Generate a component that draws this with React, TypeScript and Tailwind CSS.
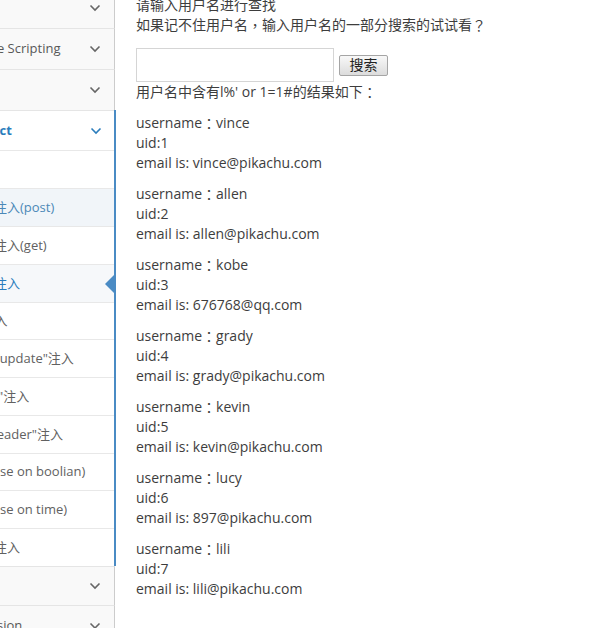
import React from "react";

const subItems = [
  { label: "概述" },
  { label: "数字型注入(post)", hover: true },
  { label: "字符型注入(get)" },
  { label: "搜索型注入", active: true },
  { label: "xx型注入", short: true },
  { label: "\"insert/update\"注入" },
  { label: "\"delete\"注入" },
  { label: "\"http header\"注入" },
  { label: "盲注(base on boolian)", short: true },
  { label: "盲注(base on time)" },
  { label: "宽字节注入" },
];

const results = [
  { name: "vince", uid: 1, email: "vince@pikachu.com" },
  { name: "allen", uid: 2, email: "allen@pikachu.com" },
  { name: "kobe", uid: 3, email: "676768@qq.com" },
  { name: "grady", uid: 4, email: "grady@pikachu.com" },
  { name: "kevin", uid: 5, email: "kevin@pikachu.com" },
  { name: "lucy", uid: 6, email: "897@pikachu.com" },
  { name: "lili", uid: 7, email: "lili@pikachu.com" },
];

// full-width punctuation, centred like the original page renders it
function P({ c }: { c: string }) {
  return (
    <span className="inline-block h-[20px] leading-[20px] align-top font-['Noto_Sans_CJK_TC',sans-serif]">{c}</span>
  );
}

function Chevron({ className = "" }: { className?: string }) {
  return (
    <svg width="12" height="8" viewBox="0 0 12 8" fill="none" className={className}>
      <polyline points="1.5,1.5 6,6 10.5,1.5" stroke="currentColor" strokeWidth="1.6" />
    </svg>
  );
}

function MainRow({ label, h }: { label?: string; h: string }) {
  return (
    <li className={`flex items-center w-[115px] ${h} bg-[#f9f9f9] border-t border-[#e5e5e5] border-r border-r-[#cccccc] text-[#585858] overflow-hidden`}>
      <span className="-ml-[56px] whitespace-nowrap">{label}</span>
      <Chevron className="ml-auto mr-[13px] shrink-0 text-[#666]" />
    </li>
  );
}

export default function App() {
  return (
    <div className="flex h-[628px] overflow-hidden bg-white font-['Open_Sans','Noto_Sans_CJK_SC',sans-serif]">
      {/* Sidebar, scrolled off to the left */}
      <aside className="w-[116px] shrink-0 text-[13px]">
        <ul className="-mt-[13px]">
          <MainRow h="h-[41px]" />
          <MainRow label="Cross-Site Scripting" h="h-[41px]" />
          <MainRow label="CSRF" h="h-[41px]" />

          {/* open group */}
          <li className="w-[116px] border-r-2 border-[#4a8bc4]">
            <div className="flex items-center h-[40px] bg-white border-t border-[#e5e5e5] text-[#2b7dbc] font-bold overflow-hidden">
              <span className="-ml-[54px] whitespace-nowrap">SQL-Inject</span>
              <Chevron className="ml-auto mr-[12px] shrink-0" />
            </div>
            <ul className="bg-white">
              {subItems.map((item) => (
                <li
                  key={item.label}
                  className={`relative flex items-center ${item.short ? "h-[37px]" : "h-[38px]"} border-t border-[#e8e8e8] overflow-hidden ${
                    item.hover ? "bg-[#f1f5f9] text-[#4b88b7]" : item.active ? "bg-[#f6f8fa] text-[#2b7dbc]" : "text-[#616161]"
                  }`}
                >
                  <span className="-ml-[45px] whitespace-nowrap">{item.label}</span>
                  {item.active && (
                    <span className="absolute right-0 top-1/2 -translate-y-1/2 border-y-[9px] border-y-transparent border-r-[9px] border-r-[#4a8bc4]" />
                  )}
                </li>
              ))}
            </ul>
          </li>

          <MainRow label="RCE" h="h-[39px]" />
          <MainRow label="File Inclusion" h="h-[41px]" />
        </ul>
      </aside>

      {/* Main content */}
      <main className="flex-1 pl-[20px] text-[14px] leading-[20px] text-[#3d3d3d]">
        <div className="-mt-[5px]">
          <p>请输入用户名进行查找</p>
          <p>
            如果记不住用户名<P c="，" />输入用户名的一部分搜索的试试看<P c="？" />
          </p>
          <form className="mt-[13px] flex items-center gap-[5px]">
            <input type="text" className="w-[198px] h-[34px] border border-[#d5d5d5] bg-white outline-none px-2" />
            <button
              type="button"
              className="w-[49px] h-[21px] rounded-[2px] border border-[#a5a5a5] bg-linear-to-b from-[#f8f8f8] to-[#dcdcdc] text-[14px] leading-[18px] text-[#222]"
            >
              搜索
            </button>
          </form>
          <p className="mb-[11px]">
            用户名中含有l%' or 1=1#的结果如下<P c="：" />
          </p>
          {results.map((r) => (
            <p key={r.uid} className="mb-[11px]">
              username<P c="：" />{r.name}
              <br />
              uid:{r.uid}
              <br />
              email is: {r.email}
            </p>
          ))}
        </div>
      </main>
    </div>
  );
}
